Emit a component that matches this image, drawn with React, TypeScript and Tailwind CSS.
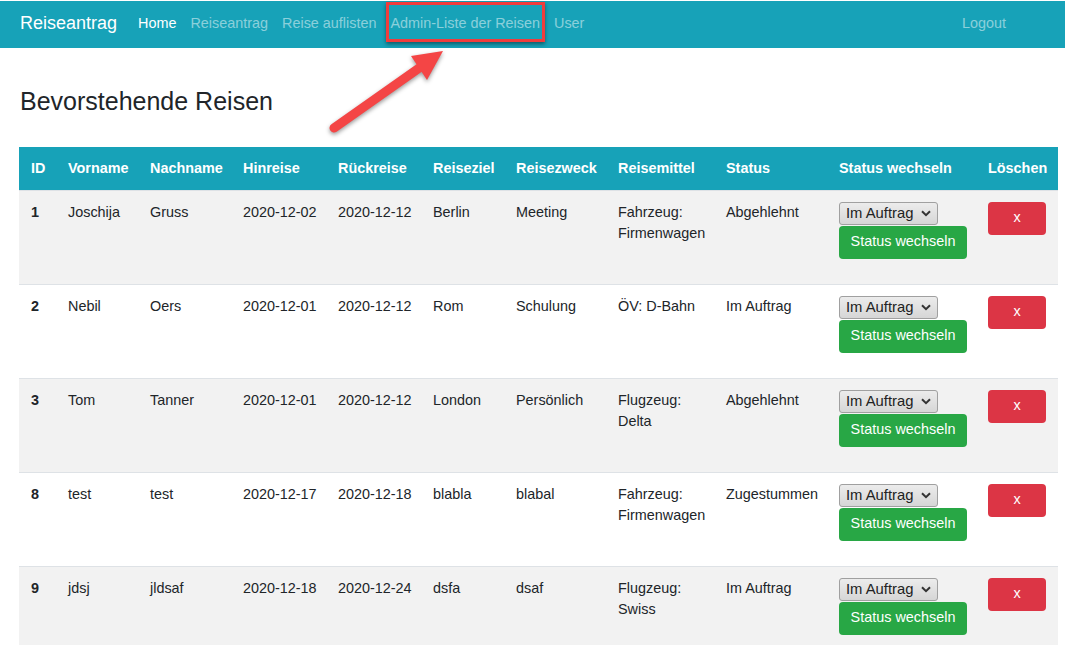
import React from 'react';

type Trip = {
  id: number;
  vorname: string;
  nachname: string;
  hinreise: string;
  rueckreise: string;
  ziel: string;
  zweck: string;
  mittel: string[];
  status: string;
};

const trips: Trip[] = [
  { id: 1, vorname: 'Joschija', nachname: 'Gruss', hinreise: '2020-12-02', rueckreise: '2020-12-12', ziel: 'Berlin', zweck: 'Meeting', mittel: ['Fahrzeug:', 'Firmenwagen'], status: 'Abgehlehnt' },
  { id: 2, vorname: 'Nebil', nachname: 'Oers', hinreise: '2020-12-01', rueckreise: '2020-12-12', ziel: 'Rom', zweck: 'Schulung', mittel: ['ÖV: D-Bahn'], status: 'Im Auftrag' },
  { id: 3, vorname: 'Tom', nachname: 'Tanner', hinreise: '2020-12-01', rueckreise: '2020-12-12', ziel: 'London', zweck: 'Persönlich', mittel: ['Flugzeug:', 'Delta'], status: 'Abgehlehnt' },
  { id: 8, vorname: 'test', nachname: 'test', hinreise: '2020-12-17', rueckreise: '2020-12-18', ziel: 'blabla', zweck: 'blabal', mittel: ['Fahrzeug:', 'Firmenwagen'], status: 'Zugestummen' },
  { id: 9, vorname: 'jdsj', nachname: 'jldsaf', hinreise: '2020-12-18', rueckreise: '2020-12-24', ziel: 'dsfa', zweck: 'dsaf', mittel: ['Flugzeug:', 'Swiss'], status: 'Im Auftrag' },
];

const columns = [
  { label: 'ID', w: 'w-[37px]' },
  { label: 'Vorname', w: 'w-[82px]' },
  { label: 'Nachname', w: 'w-[93px]' },
  { label: 'Hinreise', w: 'w-[95px]' },
  { label: 'Rückreise', w: 'w-[95px]' },
  { label: 'Reiseziel', w: 'w-[83px]' },
  { label: 'Reisezweck', w: 'w-[102px]' },
  { label: 'Reisemittel', w: 'w-[108px]' },
  { label: 'Status', w: 'w-[113px]' },
  { label: 'Status wechseln', w: 'w-[149px]' },
  { label: 'Löschen', w: 'w-[82px]' },
];

function StatusSelect() {
  return (
    <div className="flex items-center justify-between w-[99px] h-[23px] pl-[6px] pr-[5px] rounded-[3px] border border-[#a0a0a0] bg-gradient-to-b from-[#ececec] to-[#d6d6d6] text-[#222] text-[14.8px] leading-none">
      <span>Im Auftrag</span>
      <svg width="10" height="7" viewBox="0 0 10 7" className="mr-[1px]">
        <path d="M1 1.2 L5 5.2 L9 1.2" fill="none" stroke="#333" strokeWidth="2" />
      </svg>
    </div>
  );
}

export default function App() {
  const td = 'px-[12px] pt-[11px] align-top whitespace-nowrap';
  return (
    <div className="relative min-h-[645px] bg-white text-[#212529] text-[14.4px] leading-[21.6px] font-['Liberation_Sans',Arial,sans-serif]">
      <nav className="flex items-center h-[47px] mt-[1px] bg-[#17a2b8] pl-[20px] pr-[52px] pb-[2px]">
        <span className="text-white text-[18px] mr-[14px]">Reiseantrag</span>
        <a className="px-[7px] text-white">Home</a>
        <a className="px-[7px] text-white/50">Reiseantrag</a>
        <a className="px-[7px] text-white/50">Reise auflisten</a>
        <a className="px-[7px] text-white/50">Admin-Liste der Reisen</a>
        <a className="px-[7px] text-white/50">User</a>
        <a className="ml-auto px-[7px] text-white/50">Logout</a>
      </nav>

      <h3 className="ml-[20px] mt-[38px] mb-[31px] text-[25px] leading-[30px]">Bevorstehende Reisen</h3>

      <table className="ml-[19px] w-[1039px] table-fixed border-collapse">
        <thead>
          <tr className="bg-[#17a2b8] text-white">
            {columns.map((c) => (
              <th key={c.label} className={`${c.w} px-[12px] pt-[11px] pb-[10px] text-left font-bold whitespace-nowrap`}>
                {c.label}
              </th>
            ))}
          </tr>
        </thead>
        <tbody>
          {trips.map((t, i) => (
            <tr key={t.id} className={`h-[94px] border-t border-[#dee2e6] ${i % 2 === 0 ? 'bg-[#f2f2f2]' : 'bg-white'}`}>
              <td className={`${td} font-bold`}>{t.id}</td>
              <td className={td}>{t.vorname}</td>
              <td className={td}>{t.nachname}</td>
              <td className={td}>{t.hinreise}</td>
              <td className={td}>{t.rueckreise}</td>
              <td className={td}>{t.ziel}</td>
              <td className={td}>{t.zweck}</td>
              <td className={td}>
                {t.mittel.map((m) => (
                  <div key={m}>{m}</div>
                ))}
              </td>
              <td className={td}>{t.status}</td>
              <td className={td}>
                <div className="flex flex-col items-start">
                  <StatusSelect />
                  <button className="mt-[1px] w-[128px] h-[33px] rounded-[4px] bg-[#28a745] text-white">Status wechseln</button>
                </div>
              </td>
              <td className={td}>
                <button className="w-[58px] h-[33px] rounded-[4px] bg-[#dc3545] text-white">x</button>
              </td>
            </tr>
          ))}
        </tbody>
      </table>

      {/* annotation: highlight box + arrow */}
      <div className="absolute left-[386px] top-[1px] w-[159px] h-[40px] border-[3px] border-[#f03c3c] shadow-[0_2px_4px_rgba(0,0,0,0.45)]" />
      <svg
        className="absolute left-[320px] top-[40px] drop-shadow-[0_2px_2px_rgba(0,0,0,0.4)]"
        width="140"
        height="100"
        viewBox="0 0 140 100"
      >
        <line x1="14" y1="87" x2="102" y2="25" stroke="#f44545" strokeWidth="9" strokeLinecap="round" />
        <polygon points="123,10 91,15 107,39" fill="#f44545" />
      </svg>
    </div>
  );
}
